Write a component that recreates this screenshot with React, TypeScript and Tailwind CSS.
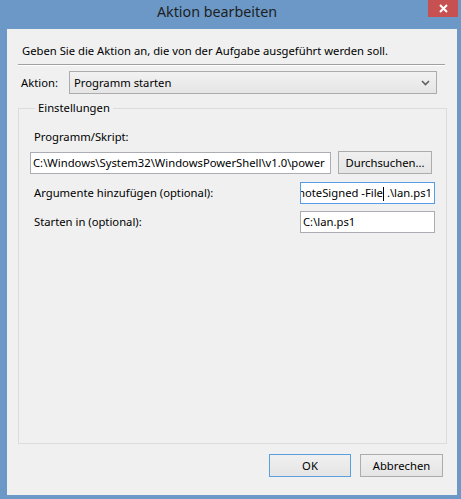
import React from "react";

const font = { fontFamily: '"Noto Sans", "Open Sans", sans-serif' };

function Field({ children, focused }: { children: React.ReactNode; focused?: boolean }) {
  return (
    <div
      className={`h-[22px] bg-white border flex items-center overflow-hidden whitespace-nowrap ${
        focused ? "border-[#569de5]" : "border-[#abadb3]"
      }`}
    >
      {children}
    </div>
  );
}

export default function App() {
  return (
    <div
      className="w-[461px] h-[499px] bg-[#6b98c6] flex flex-col text-[11.25px] text-black leading-[16px]"
      style={font}
    >
      {/* title bar */}
      <div className="h-[29px] flex items-start relative">
        <div className="flex-1 text-center text-[14.3px] leading-[24px] text-[#1e1e1e] pl-[6px]">
          Aktion bearbeiten
        </div>
        <div className="w-[30px] h-[17px] bg-[#c75050] mr-[3px] flex items-center justify-center">
          <svg width="9" height="9" viewBox="0 0 9 9">
            <path d="M1 1 L8 8 M8 1 L1 8" stroke="white" strokeWidth="2" />
          </svg>
        </div>
      </div>

      {/* client area */}
      <div className="ml-[7px] mr-[4px] h-[466px] bg-[#f0f0f0] flex flex-col">
        <div className="pt-[14px] pl-[15px]">Geben Sie die Aktion an, die von der Aufgabe ausgeführt werden soll.</div>
        <div className="mt-[5px] ml-[11px] mr-[12px] border-t border-[#a0a0a0] border-b-white border-b" />

        <div className="mt-[5px] flex items-center pl-[14px] pr-[20px]">
          <span className="w-[48px]">Aktion:</span>
          <div className="flex-1 h-[23px] border border-[#acacac] bg-gradient-to-b from-[#f2f2f2] to-[#e5e5e5] flex items-center pl-[4px] pr-[6px]">
            <span className="flex-1">Programm starten</span>
            <svg width="9" height="6" viewBox="0 0 9 6">
              <path d="M1 1 L4.5 4.5 L8 1" fill="none" stroke="#5f5f5f" strokeWidth="1.6" />
            </svg>
          </div>
        </div>

        <fieldset className="mt-[6px] ml-[11px] mr-[10px] h-[344px] border border-[#dcdcdc] px-[11px]">
          <legend className="ml-[5px] px-[3px] leading-[16px]">Einstellungen</legend>
          <div className="mt-[13px] pl-[4px]">Programm/Skript:</div>
          <div className="mt-[6px] flex items-center">
            <div className="w-[301px]">
              <Field>
                <span className="pl-[2px]">C:\Windows\System32\WindowsPowerShell\v1.0\power</span>
              </Field>
            </div>
            <button className="ml-[7px] w-[94px] h-[23px] border border-[#acacac] bg-gradient-to-b from-[#f0f0f0] to-[#e5e5e5]">
              Durchsuchen...
            </button>
          </div>

          <div className="mt-[8px] flex items-center">
            <span className="flex-1 pl-[4px]">Argumente hinzufügen (optional):</span>
            <div className="w-[135px]">
              <Field focused>
                <div className="flex-1 flex justify-end overflow-hidden pr-[2px]">
                  <span>
                    RemoteSigned -File
                    <span className="inline-block w-px h-[14px] bg-black align-middle" />
                    {" "}.\lan.ps1
                  </span>
                </div>
              </Field>
            </div>
          </div>

          <div className="mt-[7px] flex items-center">
            <span className="flex-1 pl-[4px]">Starten in (optional):</span>
            <div className="w-[135px]">
              <Field>
                <span className="pl-[2px]">C:\lan.ps1</span>
              </Field>
            </div>
          </div>
        </fieldset>

        <div className="mt-[10px] flex justify-end gap-[9px] pr-[14px]">
          <button className="w-[82px] h-[23px] border border-[#5aa0e0] bg-gradient-to-b from-[#f0f0f0] to-[#e5e5e5]">
            OK
          </button>
          <button className="w-[83px] h-[23px] border border-[#acacac] bg-gradient-to-b from-[#f0f0f0] to-[#e5e5e5]">
            Abbrechen
          </button>
        </div>
      </div>
    </div>
  );
}
